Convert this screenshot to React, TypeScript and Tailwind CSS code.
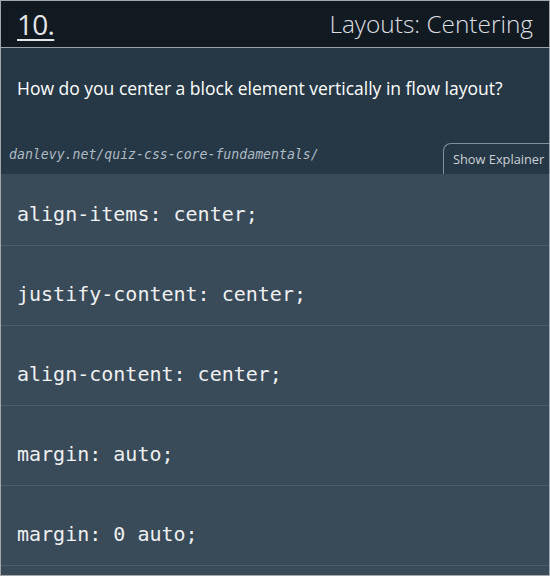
import React from 'react';

const options = ['align-items: center;', 'justify-content: center;', 'align-content: center;', 'margin: auto;', 'margin: 0 auto;'];

const App = () => {
  return (
    <div className="w-[550px] h-[576px] overflow-hidden border border-[#a3a7ab] bg-[#394a59] font-['Open_Sans','Noto_Sans',sans-serif]">
      {/* Header */}
      <div className="h-[47px] bg-[#121a21] border-b border-[#9aa3aa] flex items-center justify-between pl-4 pr-4">
        <span className="text-[28px] text-[#e3e5e7] underline underline-offset-[4px] decoration-2 tracking-tight leading-none">10.</span>
        <span className="text-[24.4px] font-light text-[#dcdfe2]">Layouts: Centering</span>
      </div>

      {/* Question */}
      <div className="bg-[#263845] h-[126px] flex flex-col">
        <p className="pl-4 pt-[28px] text-[17.5px] text-white leading-6 whitespace-nowrap">How do you center a block element vertically in flow layout?</p>
        <div className="mt-auto flex items-end justify-between">
          <span className="pl-2 pb-[9px] text-[13.2px] italic text-[#aebac4] font-['DejaVu_Sans_Mono',monospace]">danlevy.net/quiz-css-core-fundamentals/</span>
          <button className="h-[31px] w-[106px] border-l border-t border-[#7f8f9b] rounded-tl-[8px] text-[12.8px] text-[#c9d1d7] pt-[2px] text-left pl-[9px] whitespace-nowrap">Show Explainer</button>
        </div>
      </div>

      {/* Options */}
      <div className="flex flex-col">
        {options.map((opt, i) => (
          <div
            key={opt}
            className={`border-b border-[#4b5c6a] pl-4 pb-[19px] text-[20px] leading-6 text-[#eef0f2] font-['DejaVu_Sans_Mono',monospace] ${i === 0 ? 'pt-[28px]' : 'pt-[36px]'}`}
          >
            {opt}
          </div>
        ))}
      </div>
    </div>
  );
};

export default App;
